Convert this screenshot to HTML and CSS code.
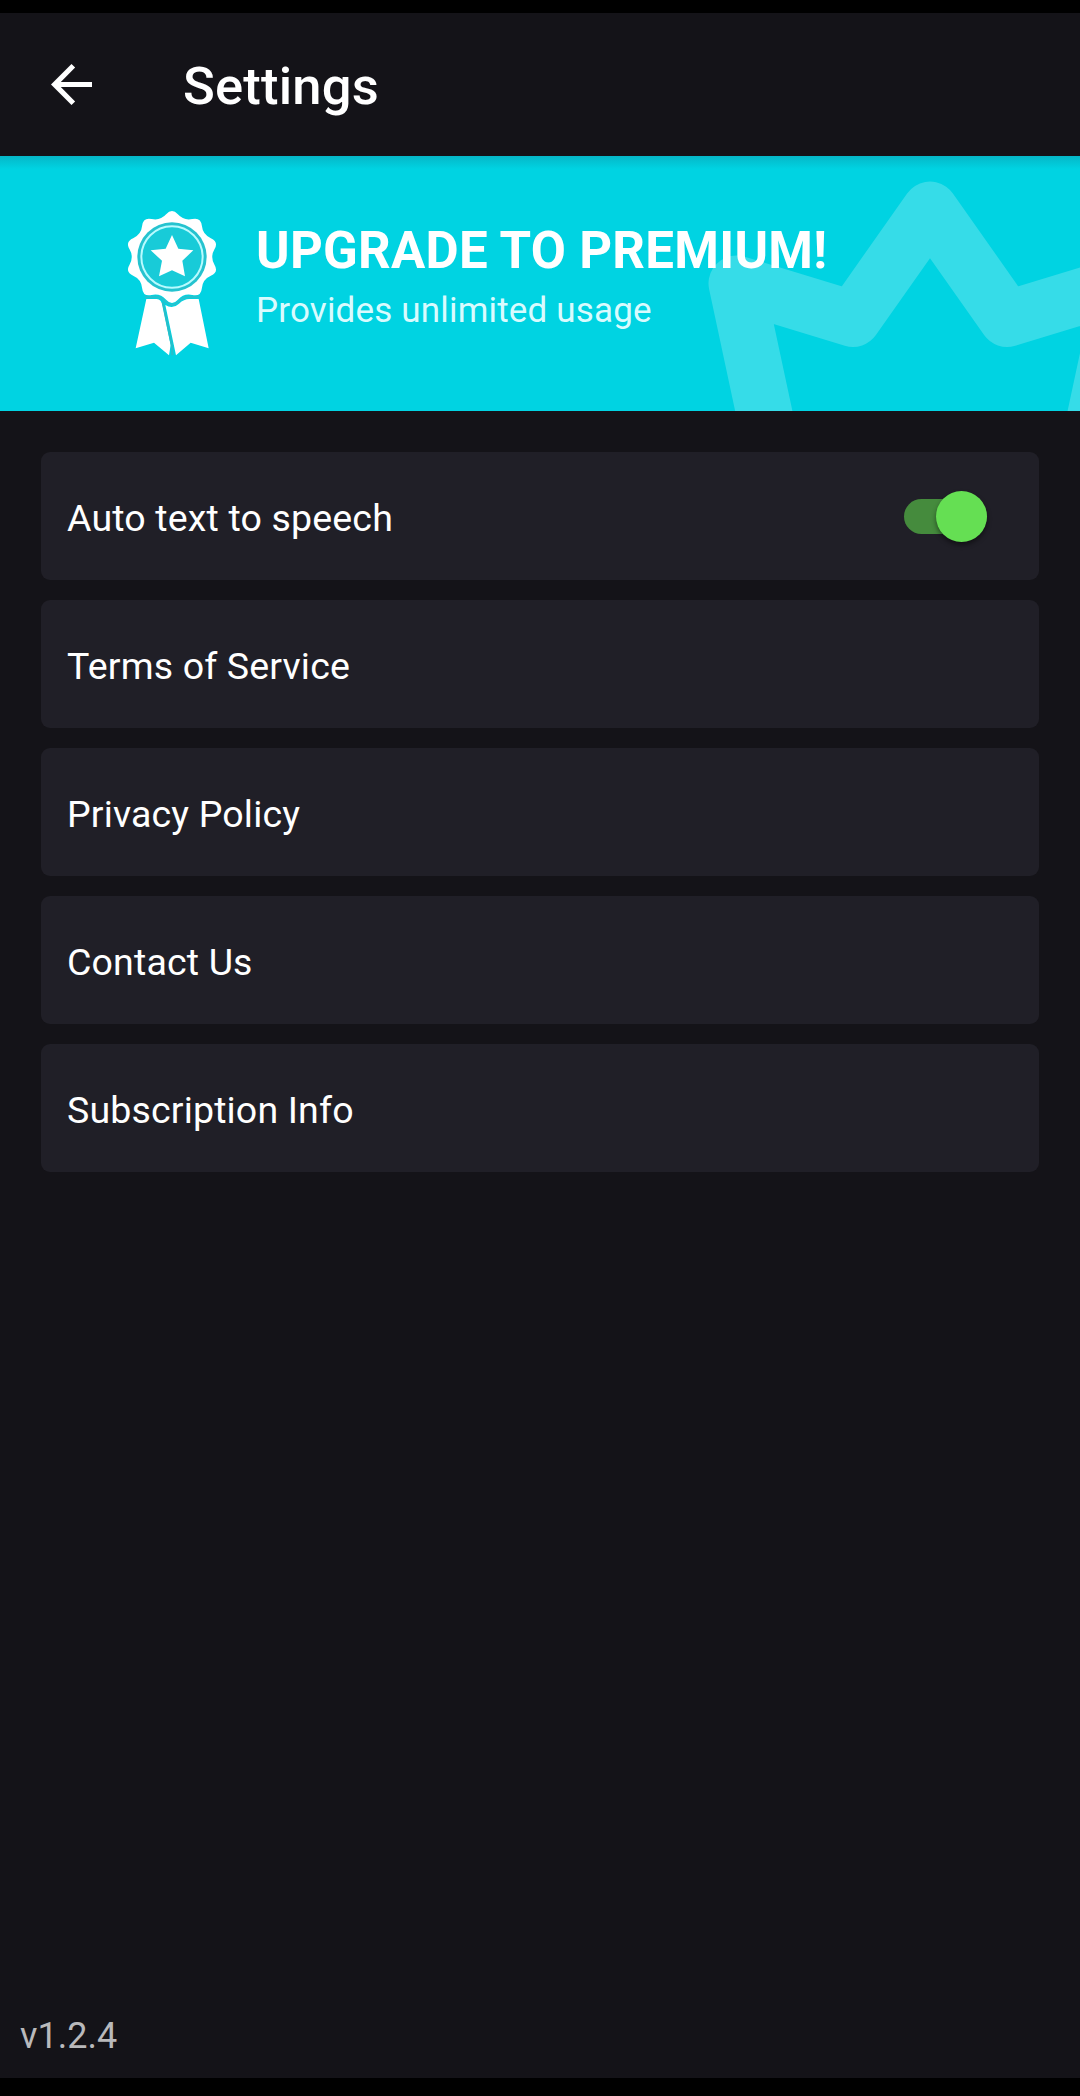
FILE: index.html
```html
<!DOCTYPE html>
<html lang="en">
<head>
<meta charset="utf-8">
<title>Settings</title>
<link rel="stylesheet" href="styles.css">
</head>
<body>
<div class="screen">
  <header class="app-bar">
    <svg class="back" viewBox="0 0 16 16" aria-label="Back"><path fill="#fff" d="M16 7H3.83l5.59-5.59L8 0 0 8l8 8 1.41-1.41L3.83 9H16z"/></svg>
    <h1 class="title">Settings</h1>
  </header>
  <section class="banner">
    <svg class="crown" viewBox="700 156 380 255" aria-hidden="true">
      <path d="M770 440L736.5 283.5L853 319L930 209.6L1007 319L1123.5 283.5L1090 440" fill="none" stroke="#fff" stroke-opacity=".21" stroke-width="56" stroke-linejoin="round"/>
    </svg>
    <svg class="medal" viewBox="84 60 270 441" aria-hidden="true">
      <g fill="#fff">
        <path d="M139 327H170Q184 328 188 347L212 465L207 496L162 458L107 475Z"/>
        <path d="M196 345Q218 359 237 341Q252 327 268 327H296L326 475L272 458L228 496Z"/>
      </g>
      <path d="M188 335L216 467L217 496" fill="none" stroke="#25bfcb" stroke-width="7"/>
      <path d="M135 321H173C190 322 201 345 216 345S243 322 260 321H298" fill="none" stroke="#25c3cf" stroke-width="7"/>
      <g transform="translate(216 201)">
        <path fill="#fff" d="M-17.6-128.2Q0-148 17.6-128.2Q35.2-108.4 61.1-114.1Q87-119.7 89.6-93.4Q92.2-67 116.5-56.4Q140.8-45.7 127.4-22.9Q114 0 127.4 22.9Q140.8 45.7 116.5 56.4Q92.2 67 89.6 93.4Q87 119.7 61.1 114.1Q35.2 108.4 17.6 128.2Q0 148-17.6 128.2Q-35.2 108.4-61.1 114.1Q-87 119.7-89.6 93.4Q-92.2 67-116.5 56.4Q-140.8 45.7-127.4 22.9Q-114 0-127.4-22.9Q-140.8-45.7-116.5-56.4Q-92.2-67-89.6-93.4Q-87-119.7-61.1-114.1Q-35.2-108.4-17.6-128.2Z"/>
        <circle r="104" fill="#25c3cf"/>
        <circle r="92" fill="#18cbd8" stroke="#b8fbff" stroke-width="6"/>
        <path fill="#fff" d="M0-66L19-25L64-20L31 11L39 58L0 40L-39 58L-30 11L-64-20L-19-25Z"/>
      </g>
    </svg>
    <div class="banner-text">
      <h2 class="banner-title">UPGRADE TO PREMIUM!</h2>
      <p class="banner-sub">Provides unlimited usage</p>
    </div>
  </section>
  <main class="list">
    <div class="item"><span>Auto text to speech</span><span class="switch" role="switch" aria-checked="true"><span class="thumb"></span></span></div>
    <div class="item"><span>Terms of Service</span></div>
    <div class="item"><span>Privacy Policy</span></div>
    <div class="item"><span>Contact Us</span></div>
    <div class="item"><span>Subscription Info</span></div>
  </main>
  <footer class="version">v1.2.4</footer>
</div>
</body>
</html>
```
FILE: styles.css
```css
* { box-sizing: border-box; }
body { margin: 0; background: #000; color: #fff; font-family: Roboto, sans-serif; }
h1, h2, p { margin: 0; }
.screen { display: flex; flex-direction: column; height: 2096px; border: solid #000; border-width: 13px 0 18px; background: #141318; }
.app-bar { display: flex; align-items: center; height: 143px; padding: 0 51px; gap: 91px; }
.back { width: 41px; height: 41px; }
.title { font-size: 52.5px; font-weight: 500; line-height: 62px; letter-spacing: .2px; padding-top: 3px; }
.banner { position: relative; display: flex; align-items: flex-start; height: 255px; padding: 54px 0 0 128px; gap: 38px; background: linear-gradient(rgba(20, 110, 130, .28), rgba(20, 110, 130, 0) 13px) #00d3e2; overflow: hidden; }
.crown { position: absolute; right: 0; top: 0; width: 380px; height: 255px; }
.medal { position: relative; width: 90px; height: 147px; }
.banner-text { position: relative; padding-top: 10px; white-space: nowrap; }
.banner-title { font-size: 51px; font-weight: 700; line-height: 62px; letter-spacing: .28px; }
.banner-sub { font-size: 35px; line-height: 42px; letter-spacing: .17px; padding-top: 8px; color: #d9fbfe; }
.list { display: flex; flex-direction: column; gap: 20px; padding: 41px 41px 0; }
.item { display: flex; align-items: center; justify-content: space-between; height: 128px; padding: 3px 52px 0 26px; border-radius: 9px; background: #201f27; font-size: 37.5px; letter-spacing: .16px; }
.switch { display: flex; align-items: center; justify-content: flex-end; width: 83px; height: 35px; margin-top: -2px; border-radius: 18px; background: #458b3d; }
.thumb { width: 51px; height: 51px; flex: none; border-radius: 50%; background: #65df53; box-shadow: 0 3px 5px rgba(0, 0, 0, .45); }
.version { margin-top: auto; padding: 0 0 21px 20px; font-size: 36px; line-height: 42px; color: #b9b9bb; }
```
